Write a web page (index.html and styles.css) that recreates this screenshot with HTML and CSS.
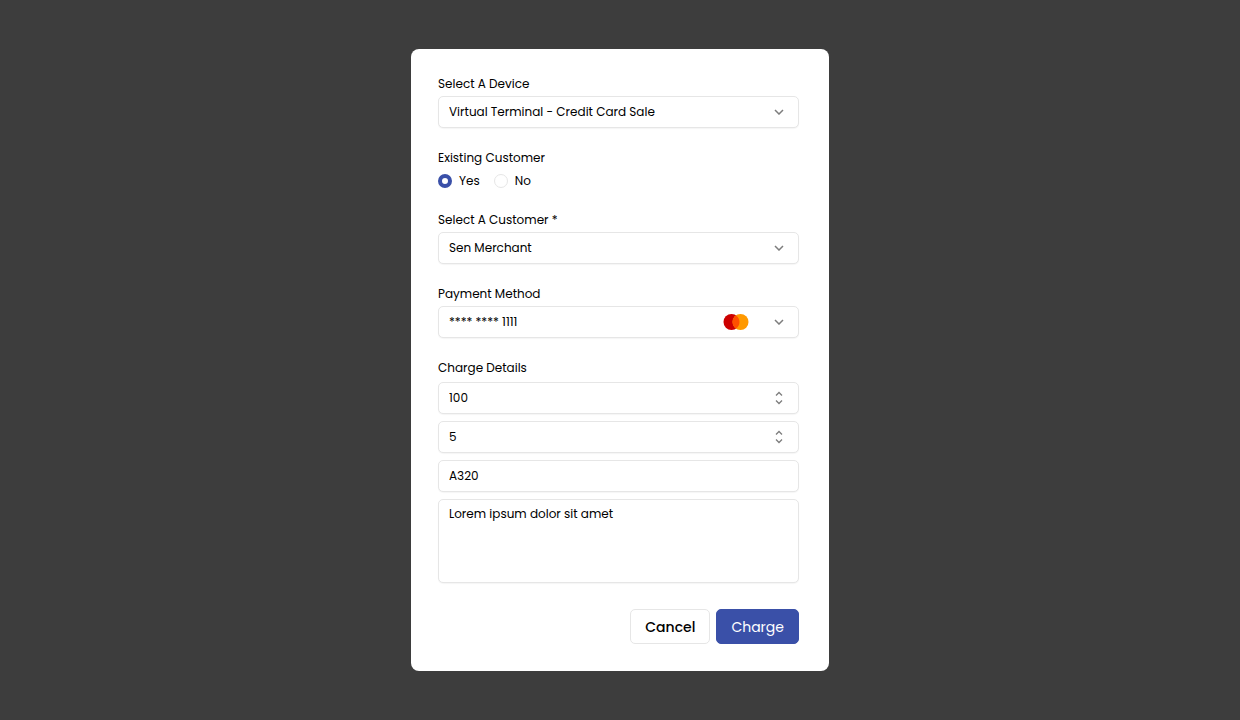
FILE: index.html
```html
<!DOCTYPE html>
<html lang="en">
<head>
    <meta charset="UTF-8">
    <meta name="viewport" content="width=device-width, initial-scale=1.0">
    <title>Charge</title>
    <link rel="stylesheet" href="styles.css">
</head>
<body>

    <form class="modal">
        <div class="group">
            <label for="device">Select A Device</label>
            <div class="control">
                <select id="device">
                    <option>Virtual Terminal - Credit Card Sale</option>
                </select>
                <svg class="arrow" viewBox="0 0 10 6"><path d="M1 1l4 4 4-4"/></svg>
            </div>
        </div>

        <fieldset class="group">
            <legend>Existing Customer</legend>
            <div class="radios">
                <label><input type="radio" name="existing" value="yes" checked>Yes</label>
                <label><input type="radio" name="existing" value="no">No</label>
            </div>
        </fieldset>

        <div class="group">
            <label for="customer">Select A Customer *</label>
            <div class="control">
                <select id="customer">
                    <option>Sen Merchant</option>
                </select>
                <svg class="arrow" viewBox="0 0 10 6"><path d="M1 1l4 4 4-4"/></svg>
            </div>
        </div>

        <div class="group">
            <label for="payment">Payment Method</label>
            <div class="control">
                <select id="payment">
                    <option>**** **** 1111</option>
                </select>
                <!-- Mastercard -->
                <svg class="brand" viewBox="0 0 26 16">
                    <circle cx="8.5" cy="8" r="8" fill="#cc0000"/>
                    <circle cx="17.5" cy="8" r="8" fill="#ff9900"/>
                    <path d="M13 1.4a8 8 0 0 1 0 13.2a8 8 0 0 1 0-13.2z" fill="#ff5000"/>
                </svg>
                <svg class="arrow" viewBox="0 0 10 6"><path d="M1 1l4 4 4-4"/></svg>
            </div>
        </div>

        <fieldset class="group">
            <legend>Charge Details</legend>
            <div class="details">
                <div class="control">
                    <input type="number" aria-label="Amount" value="100">
                    <svg class="stepper" viewBox="0 0 8 14"><path d="M1 4.5l3-3 3 3M1 9.5l3 3 3-3"/></svg>
                </div>
                <div class="control">
                    <input type="number" aria-label="Tip" value="5">
                    <svg class="stepper" viewBox="0 0 8 14"><path d="M1 4.5l3-3 3 3M1 9.5l3 3 3-3"/></svg>
                </div>
                <input type="text" aria-label="Reference" value="A320">
                <textarea aria-label="Description">Lorem ipsum dolor sit amet</textarea>
            </div>
        </fieldset>

        <div class="actions">
            <button type="button" class="btn">Cancel</button>
            <button type="submit" class="btn btn-primary">Charge</button>
        </div>
    </form>

</body>
</html>
```

FILE: styles.css
```css
* {
    box-sizing: border-box;
}
body {
    margin: 0;
    min-height: 100vh;
    display: flex;
    align-items: center;
    justify-content: center;
    background: #3d3d3d;
    color: #000;
    font-family: Poppins, Inter, sans-serif;
    font-size: 12px;
    line-height: 18px;
}
.modal {
    width: 100%;
    max-width: 418px;
    padding: 26px 30px 27px 27px;
    background: #fff;
    border-radius: 8px;
}
.group {
    margin: 0 0 21px;
    padding: 0;
    border: 0;
    min-width: 0;
}
.group > label,
legend {
    display: block;
    padding: 0;
}

/* Fields */
.control {
    position: relative;
}
.group > .control {
    margin-top: 3px;
}
select,
input[type="text"],
input[type="number"],
textarea {
    appearance: none;
    display: block;
    width: 100%;
    height: 32px;
    margin: 0;
    padding: 0 10px;
    border: 1px solid #e6e6e6;
    border-radius: 5px;
    background: #fff;
    color: inherit;
    font: inherit;
    box-shadow: 0 1px 1px rgba(0, 0, 0, 0.04);
}
input[type="number"] {
    appearance: textfield;
}
input::-webkit-inner-spin-button {
    appearance: none;
    margin: 0;
}
textarea {
    height: 84px;
    padding: 5px 10px;
    resize: none;
}
.arrow,
.stepper,
.brand {
    position: absolute;
    top: 0;
    bottom: 0;
    margin: auto 0;
    pointer-events: none;
}
.arrow,
.stepper {
    fill: none;
    stroke: #7d7d7d;
}
.arrow {
    right: 15px;
    width: 10px;
    height: 6px;
    stroke-width: 1.5;
}
.stepper {
    right: 16px;
    width: 8px;
    height: 14px;
    stroke-width: 1.3;
}
.brand {
    right: 50px;
    width: 26px;
    height: 16px;
}

/* Radios */
.radios {
    display: flex;
    gap: 14px;
    margin-top: 5px;
}
.radios label {
    display: flex;
    align-items: center;
    gap: 7px;
}
input[type="radio"] {
    appearance: none;
    width: 14px;
    height: 14px;
    margin: 0;
    border: 1px solid #e6e6e6;
    border-radius: 50%;
    background: #fff;
}
input[type="radio"]:checked {
    border: 4px solid #3a50a8;
}

.details {
    display: flex;
    flex-direction: column;
    gap: 7px;
    margin-top: 5px;
}

/* Buttons */
.actions {
    display: flex;
    justify-content: flex-end;
    gap: 6px;
    margin-top: 26px;
}
.btn {
    height: 35px;
    padding: 0 14px;
    border: 1px solid #e6e6e6;
    border-radius: 5px;
    background: #fff;
    color: #000;
    font: 500 14px/20px Poppins, Inter, sans-serif;
    cursor: pointer;
}
.btn-primary {
    border-color: #3a50a8;
    background: #3a50a8;
    color: #fff;
    font-weight: 400;
}
```
